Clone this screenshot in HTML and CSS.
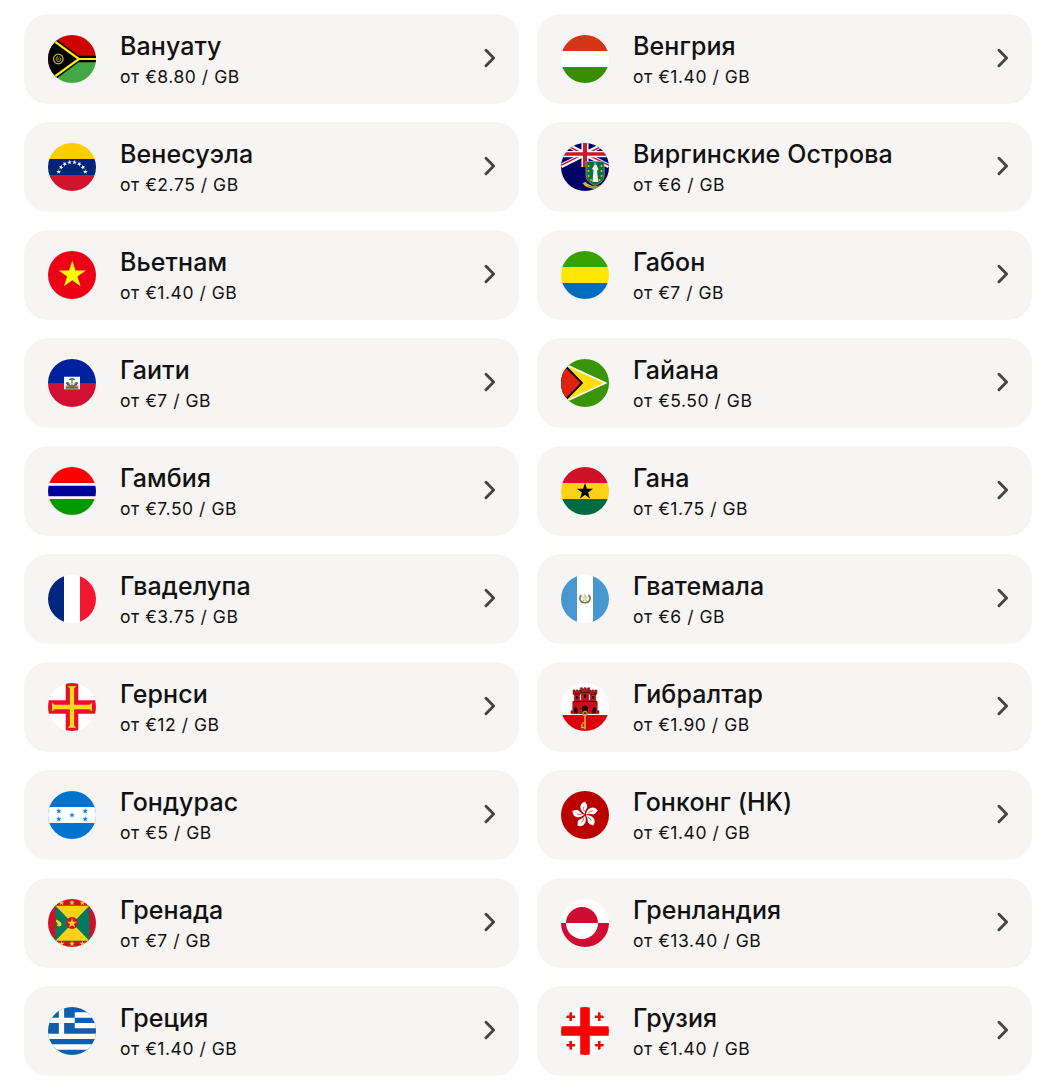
FILE: index.html
```html
<!DOCTYPE html>
<html lang="ru">
<head>
<meta charset="utf-8">
<title>eSIM</title>
<link rel="stylesheet" href="styles.css">
</head>
<body>
<svg class="defs" aria-hidden="true">
  <symbol id="chevron" viewBox="0 0 12 20"><path d="M2 2.3 9.6 10 2 17.7" fill="none" stroke="#444" stroke-width="2.9" stroke-linecap="round" stroke-linejoin="round"/></symbol>
  <path id="star" d="M0-1 .2245-.309H.951L.363.118.588.809 0 .382-.588.809-.363.118-.951-.309H-.2245Z"/>
</svg>
<main class="grid">
  <a class="card">
    <svg class="flag" viewBox="0 0 48 48"><path fill="#ce0000" d="M0 0h48v24H0z"/><path fill="#43a843" d="M0 24h48v24H0z"/><path fill="#000" d="M0-2 30.500 20.700H48v6.600H30.500L0 50z"/><path d="M-1 .8 31 24-1 47.200M30 24h18" fill="none" stroke="#fdf00a" stroke-width="2.200"/><circle cx="10.300" cy="24" r="4.800" fill="none" stroke="#c9bd12" stroke-width="1.200"/><path d="M10 21.500c-3 1-2 5 .5 5s3-3 1-4.500M10 23v2" fill="none" stroke="#c9bd12"/></svg>
    <div class="info"><h2>Вануату</h2><p>от €8.80 / GB</p></div>
    <svg class="chevron"><use href="#chevron"/></svg>
  </a>
  <a class="card">
    <svg class="flag" viewBox="0 0 48 48"><path fill="#fff" d="M0 0h48v48H0z"/><path fill="#d43516" d="M0 0h48v16H0z"/><path fill="#388d00" d="M0 32h48v16H0z"/></svg>
    <div class="info"><h2>Венгрия</h2><p>от €1.40 / GB</p></div>
    <svg class="chevron"><use href="#chevron"/></svg>
  </a>
  <a class="card">
    <svg class="flag" viewBox="0 0 48 48"><path fill="#fc0" d="M0 0h48v16H0z"/><path fill="#00247d" d="M0 16h48v16H0z"/><path fill="#cf142b" d="M0 32h48v16H0z"/><g fill="#fff"><use href="#star" transform="translate(10.7 28.800) rotate(-70) scale(2.500)"/><use href="#star" transform="translate(13 24.300) rotate(-50) scale(2.500)"/><use href="#star" transform="translate(16.700 21) rotate(-30) scale(2.500)"/><use href="#star" transform="translate(21.500 19.300) rotate(-10) scale(2.500)"/><use href="#star" transform="translate(26.500 19.300) rotate(10) scale(2.500)"/><use href="#star" transform="translate(31.300 21) rotate(30) scale(2.500)"/><use href="#star" transform="translate(35 24.300) rotate(50) scale(2.500)"/><use href="#star" transform="translate(37.300 28.800) rotate(70) scale(2.500)"/></g></svg>
    <div class="info"><h2>Венесуэла</h2><p>от €2.75 / GB</p></div>
    <svg class="chevron"><use href="#chevron"/></svg>
  </a>
  <a class="card">
    <svg class="flag" viewBox="0 0 48 48"><path fill="#006" d="M0 0h48v48H0z"/><path d="M0-1 48 23M48-1 0 23" stroke="#fff" stroke-width="4.600"/><path d="M0-.3 24 11.700M24 10.300 48 22.300M48-.3 24 11.700M24 10.300 0 22.300" stroke="#c8102e" stroke-width="1.500"/><path fill="#fff" d="M20.500 0h7v8H48v6.300H27.500V24h-7v-9.700H0V8h20.500z"/><path fill="#d2142e" d="M22 0h4v9.300h22v3.500H26V24h-4V12.800H0V9.300h22z"/><path d="M25 18.500h18.200v14c0 5-4.500 8-9.100 10-4.600-2-9.100-5-9.100-10z" fill="#097045" stroke="#c8b24c" stroke-width=".7"/><path d="m31.500 39 1-12-1.500-1 2-3.500 1.300-1.700 1.500 1.700 1.700 4-1.500 1 1.300 11.500z" fill="#f2f2e8"/><circle cx="34.200" cy="20.600" r="1.200" fill="#b98b60"/><path d="M27.500 22v2m0 3v2m0 3v2m2.500 2v2M40.500 22v2m0 3v2m0 3v2M38.500 36v2" stroke="#d9b62f" stroke-width="1.600"/><path d="M21.500 40.500l3-1.700q3 3.800 9.600 4.400 7.500-.4 9.800-4.400l-1 4.500q-3.500 2.700-8.800 2.700t-9.600-2.700z" fill="#d8bd3b"/><path d="M27 43.300q7 2.200 13 0" fill="none" stroke="#70652c" stroke-width=".8"/></svg>
    <div class="info"><h2>Виргинские Острова</h2><p>от €6 / GB</p></div>
    <svg class="chevron"><use href="#chevron"/></svg>
  </a>
  <a class="card">
    <svg class="flag" viewBox="0 0 48 48"><path fill="#ec0015" d="M0 0h48v48H0z"/><use href="#star" fill="#ff0" transform="translate(24.300 23.800) scale(14.200)"/></svg>
    <div class="info"><h2>Вьетнам</h2><p>от €1.40 / GB</p></div>
    <svg class="chevron"><use href="#chevron"/></svg>
  </a>
  <a class="card">
    <svg class="flag" viewBox="0 0 48 48"><path fill="#36a100" d="M0 0h48v16H0z"/><path fill="#ffe700" d="M0 16h48v16H0z"/><path fill="#006dbc" d="M0 32h48v16H0z"/></svg>
    <div class="info"><h2>Габон</h2><p>от €7 / GB</p></div>
    <svg class="chevron"><use href="#chevron"/></svg>
  </a>
  <a class="card">
    <svg class="flag" viewBox="0 0 48 48"><path fill="#00209f" d="M0 0h48v24H0z"/><path fill="#d21034" d="M0 24h48v24H0z"/><path fill="#fff" d="M16 17.700h16v12.600H16z"/><path d="M17 29.800q1.500-3.800 7-3.800t7 3.800z" fill="#3f7d3a"/><path d="M24 20v8" stroke="#8a7138" stroke-width="1.200"/><path d="M21 20.600q1.500-1.800 3-.8 1.500-1 3 .8L24 20.400z" fill="#137a3c" stroke="#137a3c" stroke-width=".7"/><path d="m18.500 23.500 3 3.500m8-3.500-3 3.500" stroke="#32538b" stroke-width="2"/><path d="m20.500 23 1.700 3.500m5.300-3.500-1.700 3.500" stroke="#c45b5d" stroke-width=".9"/><path d="M17.500 27.300h4m5 0h4" stroke="#b99644" stroke-width="1.600"/></svg>
    <div class="info"><h2>Гаити</h2><p>от €7 / GB</p></div>
    <svg class="chevron"><use href="#chevron"/></svg>
  </a>
  <a class="card">
    <svg class="flag" viewBox="0 0 48 48"><path fill="#399408" d="M0 0h48v48H0z"/><path fill="#fff" d="M0 2.500 46.500 24 0 45.500z"/><path fill="#ffde08" d="M0 4.600 42.800 24 0 43.400z"/><path fill="#000" d="M0 1.300 22.300 24 0 46.700z"/><path fill="#de2110" d="M0 4 19.700 24 0 44z"/></svg>
    <div class="info"><h2>Гайана</h2><p>от €5.50 / GB</p></div>
    <svg class="chevron"><use href="#chevron"/></svg>
  </a>
  <a class="card">
    <svg class="flag" viewBox="0 0 48 48"><path fill="#fff" d="M0 0h48v48H0z"/><path fill="red" d="M0 0h48v16H0z"/><path fill="#009" d="M0 18.700h48v10.600H0z"/><path fill="#090" d="M0 32h48v16H0z"/></svg>
    <div class="info"><h2>Гамбия</h2><p>от €7.50 / GB</p></div>
    <svg class="chevron"><use href="#chevron"/></svg>
  </a>
  <a class="card">
    <svg class="flag" viewBox="0 0 48 48"><path fill="#ce1126" d="M0 0h48v16H0z"/><path fill="#fcd116" d="M0 16h48v16H0z"/><path fill="#006b3f" d="M0 32h48v16H0z"/><use href="#star" transform="translate(24 24.500) scale(8.500)"/></svg>
    <div class="info"><h2>Гана</h2><p>от €1.75 / GB</p></div>
    <svg class="chevron"><use href="#chevron"/></svg>
  </a>
  <a class="card">
    <svg class="flag" viewBox="0 0 48 48"><path fill="#fff" d="M0 0h48v48H0z"/><path fill="#00267f" d="M0 0h16v48H0z"/><path fill="#f31830" d="M32 0h16v48H32z"/></svg>
    <div class="info"><h2>Гваделупа</h2><p>от €3.75 / GB</p></div>
    <svg class="chevron"><use href="#chevron"/></svg>
  </a>
  <a class="card">
    <svg class="flag" viewBox="0 0 48 48"><path fill="#fff" d="M0 0h48v48H0z"/><path fill="#4997d0" d="M0 0h16v48H0zM32 0h16v48H32z"/><path d="M20.500 20c-3.300 3-1.300 7.800 3.500 7.800s6.800-4.800 3.500-7.800" fill="none" stroke="#5d7a47" stroke-width="1.500"/><path d="m20.500 27.500 6-5.500m1 5.500-6-5.500" stroke="#9c7f5c" stroke-width="1"/><path d="M22.200 21.500h3.600v3.800h-3.600z" fill="#e8dc8e"/><path d="M23.300 19.500 25 22" stroke="#d0ae42" stroke-width="1.300"/></svg>
    <div class="info"><h2>Гватемала</h2><p>от €6 / GB</p></div>
    <svg class="chevron"><use href="#chevron"/></svg>
  </a>
  <a class="card">
    <svg class="flag" viewBox="0 0 48 48"><path fill="#fff" d="M0 0h48v48H0z"/><path fill="#e8112d" d="M17.700 0h12.600v17.300H48v13.400H30.300V48H17.700V30.700H0V17.300h17.700z"/><path fill="#f9dd16" d="M19.700 3.300h8.600l-2.200 2.200v16.300h15.400l2.500-2v8.400l-2.500-2H26.100v16.300l2.200 2.200h-8.600l2.200-2.200V26.200H6.500l-2.500 2v-8.400l2.500 2h15.400V5.500z"/></svg>
    <div class="info"><h2>Гернси</h2><p>от €12 / GB</p></div>
    <svg class="chevron"><use href="#chevron"/></svg>
  </a>
  <a class="card">
    <svg class="flag" viewBox="0 0 48 48"><path fill="#fff" d="M0 0h48v32H0z"/><path fill="#da000c" d="M0 32h48v16H0z"/><path d="M10 30.500v-2.800h1.800V19h1.500v-8h-1.200V7H14v1.300h1.200V7h2v1.300h1.200V7h1.300v4h-1v6.500h1.700V9.200h-1V4.800h2V6h1.600V4.800h2V6h1.600V4.800h2v4.400h-1v8.300h1.700V11h-1V7h1.300v1.300h1.200V7h2v1.300H34V7h1.900v4h-1.200v8h1.500v8.700H38v2.800z" fill="#c8101a" stroke="#5b0b0d" stroke-width=".6"/><path d="M12.500 11.200h6.800m9.400 0h6.800M19.800 9.400h8.400M11.800 18.500h24.400" stroke="#4e0b0d" stroke-width=".9"/><path d="M15 13h1.800v3H15zm16.200 0H33v3h-1.800zm-8.300-1.500h2.200v3.200h-2.200z" fill="#30070a"/><path d="M21 30.500v-5q0-3 3-3t3 3v5zM13 30.300v-4.500q1.700-3.500 3.500 0v4.500zm18.500 0v-4.500q1.700-3.500 3.500 0v4.500z" fill="#26060a"/><path d="M24 31v15.500M24.300 40h-3.200m3.200 4.500h-3.500v-3.500" fill="none" stroke="#ddaa32" stroke-width="1.700"/><circle cx="24" cy="30.500" r="2" fill="none" stroke="#c89632" stroke-width="1.300"/></svg>
    <div class="info"><h2>Гибралтар</h2><p>от €1.90 / GB</p></div>
    <svg class="chevron"><use href="#chevron"/></svg>
  </a>
  <a class="card">
    <svg class="flag" viewBox="0 0 48 48"><path fill="#0073cf" d="M0 0h48v48H0z"/><path fill="#fff" d="M0 16h48v16H0z"/><g fill="#0073cf"><use href="#star" transform="translate(24 24.200) scale(2.900)"/><use href="#star" transform="translate(10.800 20.200) scale(2.900)"/><use href="#star" transform="translate(10.800 28.200) scale(2.900)"/><use href="#star" transform="translate(37.200 20.200) scale(2.900)"/><use href="#star" transform="translate(37.200 28.200) scale(2.900)"/></g></svg>
    <div class="info"><h2>Гондурас</h2><p>от €5 / GB</p></div>
    <svg class="chevron"><use href="#chevron"/></svg>
  </a>
  <a class="card">
    <svg class="flag" viewBox="0 0 48 48"><path fill="#b00" d="M0 0h48v48H0z"/><g transform="translate(24.200 23.800) rotate(-4)"><g id="petal"><path fill="#fff" d="M0-.8c-3.500-2-5.500-6.500-3.300-10 1-1.500 2.500-2 4.300-2.500-.2 1.500 2 2.300 1.600 5.200-.4 2.700-2.900 3.300-2.600 7.300z"/><path d="M-.6-3.500q-1.300-2.500-.1-5" fill="none" stroke="#b00" stroke-width=".6"/></g><use href="#petal" transform="rotate(72)"/><use href="#petal" transform="rotate(144)"/><use href="#petal" transform="rotate(216)"/><use href="#petal" transform="rotate(288)"/></g></svg>
    <div class="info"><h2>Гонконг (HK)</h2><p>от €1.40 / GB</p></div>
    <svg class="chevron"><use href="#chevron"/></svg>
  </a>
  <a class="card">
    <svg class="flag" viewBox="0 0 48 48"><path fill="#ce1126" d="M0 0h48v48H0z"/><path fill="#007a5e" d="M7.500 6.700h33.800v35H7.500z"/><path fill="#fcd116" d="M7.500 6.700h33.800l-33.800 35h33.800z"/><circle cx="24" cy="24" r="6" fill="#ce1126"/><g fill="#fcd116"><use href="#star" transform="translate(24 24.300) scale(5.300)"/><use href="#star" transform="translate(13.500 3.700) scale(3.200)"/><use href="#star" transform="translate(24 3.700) scale(3.200)"/><use href="#star" transform="translate(34.500 3.700) scale(3.200)"/><use href="#star" transform="translate(13.500 44.800) scale(3.200)"/><use href="#star" transform="translate(24 44.800) scale(3.200)"/><use href="#star" transform="translate(34.500 44.800) scale(3.200)"/><path d="M8 20.500c3 1 6 3 5.500 5.500-.5 2-4 1.500-5-.3 1.500.3 1.800-.7.8-1.500-1.200-1-1.500-2.500-1.300-3.700z"/></g></svg>
    <div class="info"><h2>Гренада</h2><p>от €7 / GB</p></div>
    <svg class="chevron"><use href="#chevron"/></svg>
  </a>
  <a class="card">
    <svg class="flag" viewBox="0 0 48 48"><path fill="#fff" d="M0 0h48v24H0z"/><path fill="#d00c33" d="M0 24h48v24H0zM5 24a16 16 0 0 1 32 0z"/><path fill="#fff" d="M5 24a16 16 0 0 0 32 0z"/></svg>
    <div class="info"><h2>Гренландия</h2><p>от €13.40 / GB</p></div>
    <svg class="chevron"><use href="#chevron"/></svg>
  </a>
  <a class="card">
    <svg class="flag" viewBox="0 0 48 48"><path fill="#0d5eaf" d="M0 0h48v48H0z"/><path d="M26.700 8H48M26.700 18.700H48M0 29.300h48M0 40h48M0 13.300h26.700M13.500 0v26.700" stroke="#fff" stroke-width="5.300"/></svg>
    <div class="info"><h2>Греция</h2><p>от €1.40 / GB</p></div>
    <svg class="chevron"><use href="#chevron"/></svg>
  </a>
  <a class="card">
    <svg class="flag" viewBox="0 0 48 48"><path fill="#fff" d="M0 0h48v48H0z"/><path d="M24 0v48M0 24h48" stroke="red" stroke-width="9.600"/><path d="M9.700 5.300v8.800M5.300 9.700h8.800M38.300 5.300v8.800M33.900 9.700h8.800M9.700 33.900v8.800M5.300 38.300h8.800M38.300 33.900v8.800M33.900 38.300h8.800" stroke="red" stroke-width="2.600"/></svg>
    <div class="info"><h2>Грузия</h2><p>от €1.40 / GB</p></div>
    <svg class="chevron"><use href="#chevron"/></svg>
  </a>
</main>
</body>
</html>
```
FILE: styles.css
```css
* { box-sizing: border-box; }
body { margin: 0; background: #fff; color: #111; font-family: Inter, "Liberation Sans", sans-serif; }
.defs { position: absolute; width: 0; height: 0; }
.grid { display: grid; grid-template-columns: 495px 495px; gap: 18px; padding: 14px 23px 12px 24px; }
.card { display: flex; align-items: center; height: 90px; padding: 0 23px 0 24px; border-radius: 24px; background: #f6f5f3; }
.flag { flex: none; width: 48px; height: 48px; margin-right: 24px; border-radius: 50%; }
.info { flex: 1; padding-top: 4px; white-space: nowrap; }
h2 { margin: 0 0 2px; font-size: 25px; font-weight: 500; line-height: 30px; letter-spacing: .1px; }
p { margin: 0; font-size: 17.5px; font-weight: 400; line-height: 28px; letter-spacing: .53px; }
.chevron { flex: none; width: 12px; height: 20px; margin-bottom: 2px; }
```
